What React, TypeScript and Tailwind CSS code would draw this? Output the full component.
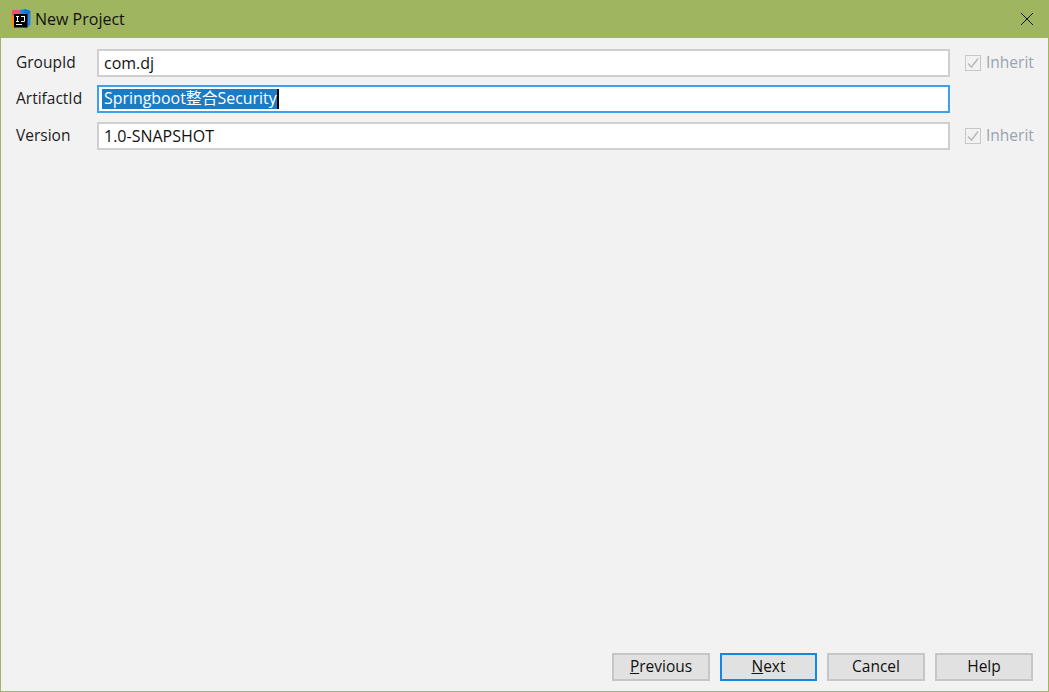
const font = { fontFamily: '"Open Sans", "Noto Sans CJK SC", sans-serif' };

function Logo() {
  return (
    <svg width="20" height="20" viewBox="0 0 20 20" className="shrink-0">
      <path d="M1 1 L10 1 L10 8 L4 18 L1 14 Z" fill="#ee4f72" />
      <path d="M0 8 L3 6 L4 19 L1 17 Z" fill="#f58a20" />
      <path d="M9 1 L14 0 L19.5 2 L19.5 16 L14 19.5 L10 12 Z" fill="#1f87e8" />
      <path d="M14 0 L19.5 2 L17 6 L12 3 Z" fill="#1a6fd0" />
      <rect x="3" y="5" width="13.5" height="13.5" fill="#000" />
      <rect x="5" y="15" width="6" height="1" fill="#fff" />
      <path d="M5 7 H8 V8 H7 V12 H8 V13 H5 V12 H6 V8 H5 Z" fill="#fff" />
      <path d="M10 7 H14 V12 Q14 13 12.5 13 H10 V12 H13 V8 H10 Z" fill="#fff" />
    </svg>
  );
}

function Inherit() {
  return (
    <div className="flex items-center gap-[5px] text-[15.5px] text-[#9aa3b0]">
      <span className="w-4 h-4 border border-[#c8c8c8] bg-[#f2f2f2] flex items-center justify-center">
        <svg width="14" height="14" viewBox="0 0 14 14" fill="none" stroke="#b9b9b9" strokeWidth="1.5">
          <path d="M2 7.5 L5.5 11 L12 2.5" />
        </svg>
      </span>
      <span className="pb-px">Inherit</span>
    </div>
  );
}

function Row({ label, value, inherit }: { label: string; value: string; inherit?: boolean }) {
  return (
    <div className="flex items-center h-7">
      <label className="w-[96px] pl-[15px] shrink-0 text-[#1c1c1c] text-[15.5px]">{label}</label>
      <div className="w-[853px] h-7 shrink-0 bg-white border-2 border-[#cfcfcf] pl-[5px] pb-px flex items-center text-[#111] text-base">
        {value}
      </div>
      {inherit && <div className="ml-[15px]"><Inherit /></div>}
    </div>
  );
}

function Btn({ children, focus }: { children: React.ReactNode; focus?: boolean }) {
  return (
    <button
      className={
        focus
          ? "w-[97px] h-7 pb-[2px] bg-[#e1e1e1] border-2 border-[#1088e6] text-[#111] text-[15.5px]"
          : "w-[98px] h-7 pb-[2px] bg-[#e1e1e1] border-2 border-[#c6c6c6] text-[#111] text-[15.5px]"
      }
    >
      {children}
    </button>
  );
}

export default function App() {
  return (
    <div
      style={font}
      className="w-[1049px] h-[692px] flex flex-col bg-[#f2f2f2] border-x border-b border-[#a0b560] overflow-hidden"
    >
      <div className="h-[38px] -mx-px bg-[#a0b560] flex items-center pl-[11px] pr-[15px] shrink-0">
        <Logo />
        <span className="ml-1 text-[#111] text-base">New Project</span>
        <svg width="14" height="14" viewBox="0 0 14 14" className="ml-auto" stroke="#111" strokeWidth="1" fill="none">
          <path d="M1 1 L13 13 M13 1 L1 13" />
        </svg>
      </div>
      <div className="flex flex-col gap-2 pt-[11px]">
        <Row label="GroupId" value="com.dj" inherit />
        <div className="flex items-center h-7">
          <label className="w-[96px] pl-[15px] shrink-0 text-[#1c1c1c] text-[15.5px]">ArtifactId</label>
          <div className="w-[853px] h-7 shrink-0 bg-white border-2 border-[#3f9fe8] pl-[3px] flex items-center text-[15.9px]">
            <span className="bg-[#1b7cc4] text-white pl-[2px] h-5 leading-[19px] border-r-2 border-black">
              Springboot整合Security
            </span>
          </div>
        </div>
        <div className="mt-px">
          <Row label="Version" value="1.0-SNAPSHOT" inherit />
        </div>
      </div>
      <div className="mt-auto flex justify-end gap-[10px] pr-[15px] pb-[10px]">
        <Btn><span className="underline">P</span>revious</Btn>
        <Btn focus><span className="underline">N</span>ext</Btn>
        <Btn>Cancel</Btn>
        <Btn>Help</Btn>
      </div>
    </div>
  );
}
